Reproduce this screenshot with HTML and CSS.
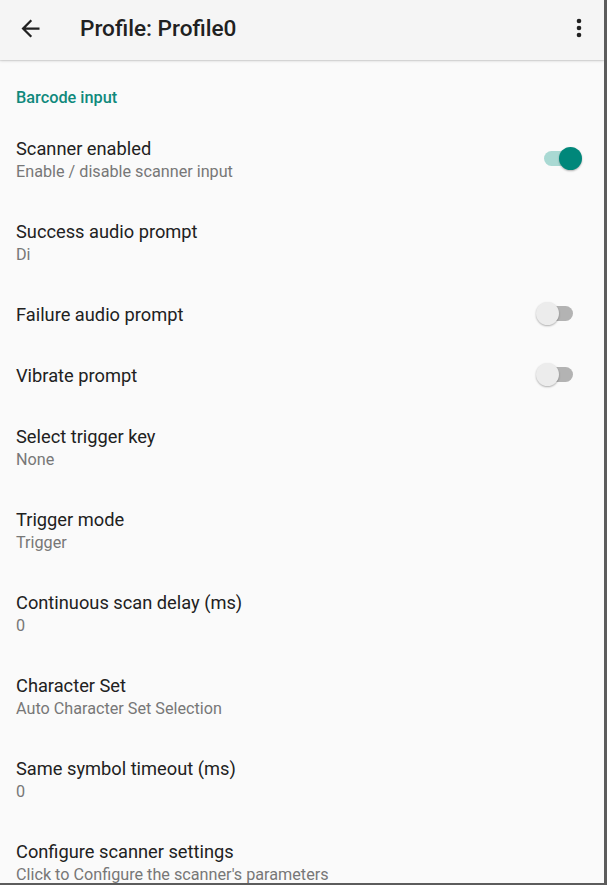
FILE: index.html
```html
<!DOCTYPE html>
<html lang="en">
<head>
<meta charset="utf-8">
<title>Profile: Profile0</title>
<link rel="stylesheet" href="styles.css">
</head>
<body>
<div class="screen">
  <header class="appbar">
    <button class="icon-btn back" aria-label="Back">
      <svg width="27" height="27" viewBox="0 0 24 24"><path d="M20 11H7.83l5.59-5.59L12 4l-8 8 8 8 1.41-1.41L7.83 13H20v-2z" fill="#212121"/></svg>
    </button>
    <h1 class="title">Profile: Profile0</h1>
    <button class="icon-btn more" aria-label="More options">
      <svg width="6" height="20" viewBox="0 0 6 20"><circle cx="3" cy="3" r="2.3" fill="#212121"/><circle cx="3" cy="10" r="2.3" fill="#212121"/><circle cx="3" cy="17" r="2.3" fill="#212121"/></svg>
    </button>
  </header>

  <main class="prefs">
    <div class="category">Barcode input</div>

    <div class="pref">
      <div class="pref-text">
        <div class="pref-title">Scanner enabled</div>
        <div class="pref-summary">Enable / disable scanner input</div>
      </div>
      <div class="switch on"><span class="track"></span><span class="thumb"></span></div>
    </div>

    <div class="pref">
      <div class="pref-text">
        <div class="pref-title">Success audio prompt</div>
        <div class="pref-summary">Di</div>
      </div>
    </div>

    <div class="pref single">
      <div class="pref-text">
        <div class="pref-title">Failure audio prompt</div>
      </div>
      <div class="switch"><span class="track"></span><span class="thumb"></span></div>
    </div>

    <div class="pref single">
      <div class="pref-text">
        <div class="pref-title">Vibrate prompt</div>
      </div>
      <div class="switch"><span class="track"></span><span class="thumb"></span></div>
    </div>

    <div class="pref">
      <div class="pref-text">
        <div class="pref-title">Select trigger key</div>
        <div class="pref-summary">None</div>
      </div>
    </div>

    <div class="pref">
      <div class="pref-text">
        <div class="pref-title">Trigger mode</div>
        <div class="pref-summary">Trigger</div>
      </div>
    </div>

    <div class="pref">
      <div class="pref-text">
        <div class="pref-title">Continuous scan delay (ms)</div>
        <div class="pref-summary">0</div>
      </div>
    </div>

    <div class="pref">
      <div class="pref-text">
        <div class="pref-title">Character Set</div>
        <div class="pref-summary">Auto Character Set Selection</div>
      </div>
    </div>

    <div class="pref">
      <div class="pref-text">
        <div class="pref-title">Same symbol timeout (ms)</div>
        <div class="pref-summary">0</div>
      </div>
    </div>

    <div class="pref">
      <div class="pref-text">
        <div class="pref-title">Configure scanner settings</div>
        <div class="pref-summary">Click to Configure the scanner's parameters</div>
      </div>
    </div>
  </main>
</div>
</body>
</html>
```

FILE: styles.css
```css
* { box-sizing: border-box; }

html, body {
  margin: 0;
  padding: 0;
  background: #5c5c5c;
}

body {
  width: 607px;
  height: 885px;
  overflow: hidden;
  font-family: Roboto, "Noto Sans", "Liberation Sans", sans-serif;
}

.screen {
  width: 604px;
  height: 883px;
  background: #fafafa;
  overflow: hidden;
  display: flex;
  flex-direction: column;
}

.appbar {
  height: 60px;
  flex: 0 0 60px;
  background: #f5f5f5;
  display: flex;
  align-items: center;
  box-shadow: 0 1px 3px rgba(0, 0, 0, 0.12), 0 1px 1px rgba(0, 0, 0, 0.08);
  position: relative;
  z-index: 1;
}

.icon-btn {
  border: 0;
  background: transparent;
  padding: 0;
  display: flex;
  align-items: center;
  justify-content: center;
}

.back {
  width: 27px;
  height: 27px;
  margin-left: 17px;
  margin-top: -4px;
}

.title {
  margin: -3px 0 0 36px;
  font-size: 22.6px;
  font-weight: 500;
  color: #212121;
  flex: 1;
}

.more {
  width: 6px;
  height: 20px;
  margin-right: 22px;
  margin-top: -4px;
}

.prefs {
  display: flex;
  flex-direction: column;
}

.category {
  padding: 28px 16px 0;
  height: 60px;
  font-size: 16.3px;
  font-weight: 500;
  color: #0f897c;
  line-height: 20px;
}

.pref {
  display: flex;
  align-items: flex-start;
  padding: 17px 0 0 16px;
  height: 83px;
}

.pref.single { height: 61px; }

.pref-text { flex: 1; }

.pref-title {
  font-size: 18.25px;
  line-height: 23px;
  color: #212121;
}

.pref-summary {
  font-size: 16.2px;
  line-height: 23px;
  color: #777777;
}

.switch {
  position: relative;
  width: 46px;
  height: 23px;
  margin-right: 22px;
  align-self: center;
  margin-bottom: 23px;
}

.pref.single .switch { margin-bottom: 23px; }

.switch .track {
  position: absolute;
  left: 8px;
  right: 9px;
  top: 4px;
  height: 15px;
  border-radius: 8px;
  background: #b3b3b3;
}

.switch .thumb {
  position: absolute;
  left: 0;
  top: 0;
  width: 23px;
  height: 23px;
  border-radius: 50%;
  background: #ececec;
  box-shadow: 0 1px 2px rgba(0, 0, 0, 0.3);
}

.switch.on .track { background: #a9d9d3; }

.switch.on .thumb {
  left: 23px;
  background: #00877a;
}
```
